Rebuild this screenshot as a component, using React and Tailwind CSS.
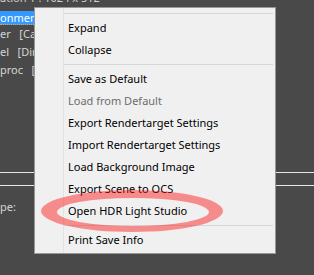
export default function App() {
  const items = [
    { sep: true },
    { label: 'Expand' },
    { label: 'Collapse' },
    { sep: true },
    { label: 'Save as Default' },
    { label: 'Load from Default', disabled: true },
    { label: 'Export Rendertarget Settings' },
    { label: 'Import Rendertarget Settings' },
    { label: 'Load Background Image' },
    { label: 'Export Scene to OCS' },
    { label: 'Open HDR Light Studio' },
    { sep: true },
    { label: 'Print Save Info' },
  ];

  return (
    <div className="relative w-[314px] h-[275px] overflow-hidden bg-[#494949] text-[11px] leading-[18px] text-[#d6d6d6]" style={{ fontFamily: '"Noto Sans", sans-serif' }}>
      {/* panel behind the menu */}
      <div className="flex flex-col">
        <div className="h-[18px] mt-[-11px] whitespace-nowrap text-[#cfcfcf]">ation 1 : 1024 x 512</div>
        <div className="h-[4px]" />
        <div className="h-[14px] leading-[14px] w-[40px] bg-[#3399ff] text-white whitespace-nowrap border-b border-dotted border-[#e8a040]">onment</div>
        <div className="h-[18px] whitespace-nowrap">er&nbsp;&nbsp;&nbsp;[Camera]</div>
        <div className="h-[18px] whitespace-nowrap">el&nbsp;&nbsp;&nbsp;[Direct lighting]</div>
        <div className="h-[18px] whitespace-nowrap">proc&nbsp;&nbsp;&nbsp;[Imager]</div>
        <div className="h-[93px]" />
        <div className="h-[1px] bg-[#e6e6e6]" />
        <div className="h-[12px]" />
        <div className="h-[1px] bg-[#e6e6e6]" />
        <div className="h-[12px]" />
        <div className="whitespace-nowrap">pe:</div>
      </div>

      {/* context menu */}
      <div className="absolute left-[34px] top-[7px] w-[242px] h-[247px] bg-[#f0f0f0] border border-[#979797] flex text-black">
        <div className="w-[29px] shrink-0 border-r border-[#e2e2e2]" />
        <div className="flex-1 flex flex-col pt-[2px] pr-[2px]">
          {items.map((it, i) =>
            it.sep ? (
              <div key={i} className="h-[7px] flex items-center">
                <div className="h-[1px] w-full bg-[#d7d7d7]" />
              </div>
            ) : (
              <div key={i} className={`h-[22px] leading-[22px] pl-[4px] whitespace-nowrap ${it.disabled ? 'text-[#6d6d6d]' : 'text-black'}`}>
                {it.label}
              </div>
            )
          )}
        </div>
      </div>

      {/* red marker ellipse */}
      <svg className="absolute left-0 top-0 pointer-events-none" width="314" height="275">
        <path
          fillRule="evenodd"
          fill="rgba(255,0,0,0.42)"
          d="M41 211 A91 21 0 1 0 223 211 A91 21 0 1 0 41 211 Z M57 212 A76 14 0 1 0 209 212 A76 14 0 1 0 57 212 Z"
        />
      </svg>
    </div>
  );
}
